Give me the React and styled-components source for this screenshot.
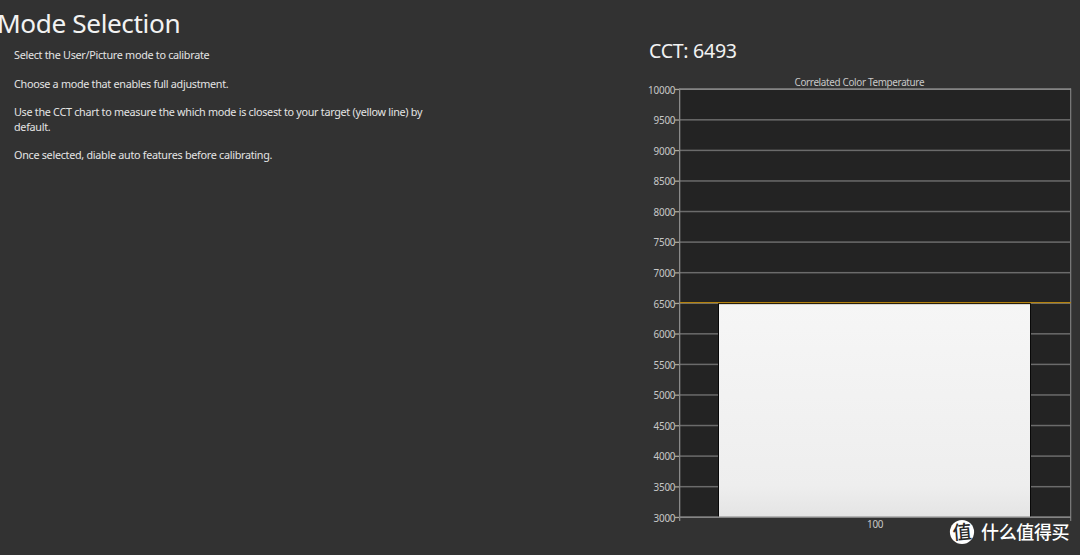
import React from 'react'
import styled, { createGlobalStyle } from "styled-components";

const GlobalStyle = createGlobalStyle`
  body {
    margin: 0;
    background: #323232;
    font-family: "Noto Sans", "Open Sans", sans-serif;
    overflow: hidden;
  }
`;

const Container = styled.main`
  display: grid;
  grid-template-columns: 640px 440px;
  height: 555px;
  background: #323232;
`;

const Intro = styled.section`
  padding-top: 5px;
`;

const Title = styled.h1`
  margin: 0 0 6.4px -3px;
  font-size: 26.2px;
  font-weight: 400;
  line-height: 37px;
  letter-spacing: -0.4px;
  color: #f2f2f2;
`;

const Text = styled.p`
  width: 430px;
  margin: 0 0 14.2px 14px;
  font-size: 10.8px;
  line-height: 14.3px;
  letter-spacing: -0.29px;
  color: #e4e4e4;
`;

const Measurement = styled.section`
  display: flex;
  flex-direction: column;
`;

const Reading = styled.h2`
  margin: 37px 0 0 9px;
  font-size: 19.6px;
  font-weight: 400;
  line-height: 27px;
  letter-spacing: -0.3px;
  color: #f2f2f2;
`;

const Chart = styled.svg`
  display: block;
  flex: none;
  width: 440px;
  height: 491px;
`;

const Label = styled.text`
  font-family: "Noto Sans", sans-serif;
  font-size: 9.9px;
  fill: #c8c8c8;
`;

const Mark = styled.text`
  font-family: "Noto Sans CJK SC", sans-serif;
  font-weight: 500;
  font-size: ${(props) => props.$size}px;
  fill: ${(props) => props.$color || "#fff"};
`;

const MIN = 3000;
const MAX = 10000;
const STEP = 500;
const TOP = 25.3;
const BOTTOM = 453.3;

const toY = (value) => BOTTOM - ((value - MIN) / (MAX - MIN)) * (BOTTOM - TOP);

const ticks = [];
for (let v = MAX; v >= MIN; v -= STEP) ticks.push(v);

const CctChart = ({ value, target }) => (
  <Chart viewBox="0 0 440 491">
    <defs>
      <linearGradient id="bar" x1="0" y1="0" x2="0" y2="1">
        <stop offset="0" stopColor="#f6f6f6" />
        <stop offset="0.85" stopColor="#eeeeee" />
        <stop offset="1" stopColor="#e4e4e4" />
      </linearGradient>
    </defs>
    <Label x="154.5" y="21.5" textLength="130">Correlated Color Temperature</Label>
    <rect x="40" y="25" width="391" height="428" fill="#232323" />
    {ticks.map((tick) => {
      const y = toY(tick);
      return (
        <g key={tick}>
          <rect x="40" y={y - 0.8} width="391" height="1.5" fill="#6b6b6b" />
          <rect x="35" y={y - 0.5} width="4" height="1.3" fill="#aaa79b" />
          <Label x={tick === MAX ? 8 : 13.5} y={y + 4.2} textLength={tick === MAX ? 27.5 : 22}>{tick}</Label>
        </g>
      );
    })}
    <rect x="39" y="24.5" width="1.3" height="432.5" fill="#8a8a8a" />
    <rect x="430" y="24.5" width="1.3" height="432.5" fill="#777" />
    <rect x="39" y="24.4" width="392" height="1.5" fill="#888" />
    <rect x="78" y={toY(value) - 0.7} width="313" height={BOTTOM - toY(value)} fill="#080808" />
    <rect x="79" y={toY(value) + 0.4} width="311" height={BOTTOM - toY(value)} fill="url(#bar)" />
    <rect x="39" y="452.5" width="392" height="1.5" fill="#858585" />
    <rect x="40" y={toY(target) - 1} width="391" height="1.2" fill="#b58310" />
    <Label x="227" y="463.7" textLength="16.5">100</Label>
    <circle cx="322" cy="468" r="12.1" fill="#fff" />
    <Mark x="312.5" y="475" $size="19" $color="#292929" transform="rotate(-5 322 468)">值</Mark>
    <Mark x="341" y="474.5" $size="18" textLength="88.5">什么值得买</Mark>
  </Chart>
);

const App = () => {
  return (
    <>
      <GlobalStyle />
      <Container>
        <Intro>
          <Title>Mode Selection</Title>
          <Text>Select the User/Picture mode to calibrate</Text>
          <Text>Choose a mode that enables full adjustment.</Text>
          <Text>Use the CCT chart to measure the which mode is closest to your target (yellow line) by default.</Text>
          <Text>Once selected, diable auto features before calibrating.</Text>
        </Intro>
        <Measurement>
          <Reading>CCT: 6493</Reading>
          <CctChart value={6493} target={6505} />
        </Measurement>
      </Container>
    </>
  );
};

export default App;
